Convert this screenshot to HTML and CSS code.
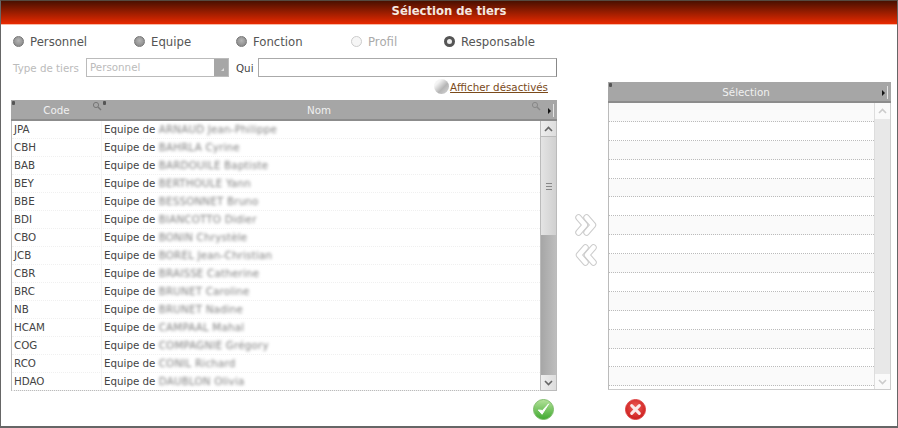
FILE: index.html
```html
<!DOCTYPE html>
<html>
<head>
	<title>Sélection de tiers</title>
	<link rel="stylesheet" href="styles.css">
</head>
<body>
<div class="win">
	<div class="titlebar">Sélection de tiers</div>
	<div class="content">
		<div class="left">
			<div class="radios">
				<label class="radio r1"><i class="dot"></i>Personnel</label>
				<label class="radio r2"><i class="dot"></i>Equipe</label>
				<label class="radio r3"><i class="dot"></i>Fonction</label>
				<label class="radio r4 off"><i class="dot"></i>Profil</label>
				<label class="radio on"><i class="dot"></i>Responsable</label>
			</div>
			<div class="filters">
				<span class="lbl">Type de tiers</span>
				<div class="combo"><span>Personnel</span><b class="combo-btn"></b></div>
				<span class="qui">Qui</span>
				<div class="input"></div>
			</div>
			<div class="linkrow"><i class="ball"></i><a href="#">Afficher désactivés</a></div>
			<div class="table">
				<div class="thead">
					<div class="th code"><em class="grip"></em>Code
						<svg class="mag m1" width="10" height="10" viewBox="0 0 10 10"><circle cx="4" cy="4" r="2.6" fill="none" stroke="#777"/><path d="M6 6l3 3" stroke="#777" stroke-width="1.4"/></svg>
						<em class="grip g2"></em>
					</div>
					<div class="th nom">Nom
						<svg class="mag m2" width="10" height="10" viewBox="0 0 10 10"><circle cx="4" cy="4" r="2.6" fill="none" stroke="#888"/><path d="M6 6l3 3" stroke="#888" stroke-width="1.4"/></svg>
						<b class="arrow"></b><i class="bar"></i>
					</div>
				</div>
				<div class="tbody">
					<div class="rows">
						<div class="row"><span class="c">JPA</span><span class="n">Equipe de <u>ARNAUD Jean-Philippe</u></span></div>
						<div class="row"><span class="c">CBH</span><span class="n">Equipe de <u>BAHRLA Cyrine</u></span></div>
						<div class="row"><span class="c">BAB</span><span class="n">Equipe de <u>BARDOUILE Baptiste</u></span></div>
						<div class="row"><span class="c">BEY</span><span class="n">Equipe de <u>BERTHOULE Yann</u></span></div>
						<div class="row"><span class="c">BBE</span><span class="n">Equipe de <u>BESSONNET Bruno</u></span></div>
						<div class="row"><span class="c">BDI</span><span class="n">Equipe de <u>BIANCOTTO Didier</u></span></div>
						<div class="row"><span class="c">CBO</span><span class="n">Equipe de <u>BONIN Chrystèle</u></span></div>
						<div class="row"><span class="c">JCB</span><span class="n">Equipe de <u>BOREL Jean-Christian</u></span></div>
						<div class="row"><span class="c">CBR</span><span class="n">Equipe de <u>BRAISSE Catherine</u></span></div>
						<div class="row"><span class="c">BRC</span><span class="n">Equipe de <u>BRUNET Caroline</u></span></div>
						<div class="row"><span class="c">NB</span><span class="n">Equipe de <u>BRUNET Nadine</u></span></div>
						<div class="row"><span class="c">HCAM</span><span class="n">Equipe de <u>CAMPAAL Mahal</u></span></div>
						<div class="row"><span class="c">COG</span><span class="n">Equipe de <u>COMPAGNIE Grégory</u></span></div>
						<div class="row"><span class="c">RCO</span><span class="n">Equipe de <u>CONIL Richard</u></span></div>
						<div class="row"><span class="c">HDAO</span><span class="n">Equipe de <u>DAUBLON Olivia</u></span></div>
					</div>
					<div class="sbar">
						<div class="sb-btn"><svg width="9" height="6" viewBox="0 0 9 6"><path d="M1 5l3.500-3.500L8 5" fill="none" stroke="#666" stroke-width="1.600"/></svg></div>
						<div class="thumb"><i></i></div>
						<div class="track"></div>
						<div class="sb-btn"><svg width="9" height="6" viewBox="0 0 9 6"><path d="M1 1l3.500 3.500L8 1" fill="none" stroke="#666" stroke-width="1.600"/></svg></div>
					</div>
				</div>
			</div>
		</div>

		<div class="mid">
			<svg width="24" height="22" viewBox="0 0 24 22" fill="none" stroke-linecap="round" stroke-linejoin="round">
				<path d="M4.500 3.500L11 11l-6.500 7.500" stroke="#ccc" stroke-width="6.500"/>
				<path d="M4.500 3.500L11 11l-6.500 7.500" stroke="#fff" stroke-width="4.500"/>
				<path d="M12.500 3.500L19 11l-6.500 7.500" stroke="#ccc" stroke-width="6.500"/>
				<path d="M12.500 3.500L19 11l-6.500 7.500" stroke="#fff" stroke-width="4.500"/>
			</svg>
			<svg width="24" height="22" viewBox="0 0 24 22" fill="none" stroke-linecap="round" stroke-linejoin="round">
				<path d="M19.500 3.500L13 11l6.500 7.500" stroke="#ccc" stroke-width="6.500"/>
				<path d="M19.500 3.500L13 11l6.500 7.500" stroke="#fff" stroke-width="4.500"/>
				<path d="M11.500 3.500L5 11l6.500 7.500" stroke="#ccc" stroke-width="6.500"/>
				<path d="M11.500 3.500L5 11l6.500 7.500" stroke="#fff" stroke-width="4.500"/>
			</svg>
		</div>

		<div class="right">
			<div class="thead sel"><em class="grip"></em>Sélection<b class="arrow"></b><i class="bar"></i></div>
			<div class="tbody sel-body">
				<div class="rows dotted">
					<div></div><div></div><div></div><div></div><div></div>
					<div></div><div></div><div></div><div></div><div></div>
					<div></div><div></div><div></div><div></div><div></div>
				</div>
				<div class="sbar faded">
					<div class="sb-btn"><svg width="9" height="6" viewBox="0 0 9 6"><path d="M1 5l3.500-3.500L8 5" fill="none" stroke="#ccc" stroke-width="1.600"/></svg></div>
					<div class="track"></div>
					<div class="sb-btn"><svg width="9" height="6" viewBox="0 0 9 6"><path d="M1 1l3.500 3.500L8 1" fill="none" stroke="#ccc" stroke-width="1.600"/></svg></div>
				</div>
			</div>
		</div>
	</div>
	<div class="actions">
		<svg width="21" height="21" viewBox="0 0 22 22">
			<defs><linearGradient id="gr" x1="0" y1="0" x2="0" y2="1"><stop offset="0" stop-color="#b4e29a"/><stop offset="1" stop-color="#3fa92f"/></linearGradient></defs>
			<circle cx="11" cy="11" r="10.500" fill="url(#gr)" stroke="#7dbb6a"/>
			<path d="M5.500 11.500l4 4.500 7-11-6.500 7z" fill="#fff" stroke="#fff" stroke-linejoin="round"/>
		</svg>
		<svg width="21" height="21" viewBox="0 0 22 22">
			<defs><radialGradient id="rd" cx=".5" cy=".4" r=".7"><stop offset="0" stop-color="#f0605a"/><stop offset="1" stop-color="#c41010"/></radialGradient></defs>
			<circle cx="11" cy="11" r="10.500" fill="url(#rd)" stroke="#d44"/>
			<path d="M7 7l8 8M15 7l-8 8" stroke="#fbeaea" stroke-width="3.200" stroke-linecap="round"/>
		</svg>
	</div>
</div>
</body>
</html>
```

FILE: styles.css
```css
*{
	box-sizing: border-box;
}

body{
	margin: 0;
	font-family: "DejaVu Sans", sans-serif;
	font-size: 10.3px;
	color: #444;
	background: #fff;
}

.win{
	width: 898px;
	height: 428px;
	border: 1px solid #666;
	border-bottom-width: 2px;
	border-top-color: #554a40;
	background: #fff;
}

.titlebar{
	height: 24px;
	background: linear-gradient(#4a1000, #e92a00);
	border-bottom: 1px solid #f9b9a5;
	color: #f5e8e0;
	font-weight: bold;
	font-size: 11.6px;
	line-height: 20px;
	text-align: center;
}

.content{
	display: flex;
	padding: 0 6px 0 10px;
}

.left{
	width: 546px;
}

.radios{
	display: flex;
	height: 33px;
	padding: 9px 0 0 2px;
	font-size: 11.7px;
	color: #555;
}

.radio{
	display: flex;
	align-items: center;
	height: 15px;
}

.r1{ width: 121px; }
.r2{ width: 102px; }
.r3{ width: 115px; }
.r4{ width: 93px; }

.dot{
	width: 11px;
	height: 11px;
	margin-right: 6px;
	border-radius: 50%;
	border: 1px solid #777;
	background: radial-gradient(circle at 50% 40%, #b5b5b5, #808080);
}

.off{
	color: #aaa;
}

.off .dot{
	border-color: #ccc;
	background: #f6f6f6;
}

.on .dot{
	border: 3px solid #555;
	background: #eee;
}

.filters{
	display: flex;
	align-items: center;
	height: 19px;
}

.lbl{
	width: 75px;
	padding-left: 2px;
	color: #bbb;
}

.combo{
	display: flex;
	justify-content: space-between;
	width: 143px;
	height: 19px;
	padding-left: 3px;
	border: 1px solid #bbb;
	line-height: 16px;
	color: #bbb;
}

.combo-btn{
	position: relative;
	width: 14px;
	background: #a6a6a6;
}

.combo-btn:after{
	content: "";
	position: absolute;
	right: 4px;
	bottom: 5px;
	border-left: 3px solid transparent;
	border-bottom: 3px solid #ddd;
}

.qui{
	width: 29px;
	padding-left: 7px;
}

.input{
	width: 299px;
	height: 19px;
	border: 1px solid #aaa;
	border-right-color: #888;
}

.linkrow{
	display: flex;
	align-items: center;
	justify-content: flex-end;
	height: 23px;
	padding: 0 9px 4px 0;
}

.linkrow a{
	margin-left: 1px;
	color: #7a4a1a;
}

.ball{
	width: 15px;
	height: 15px;
	border-radius: 50%;
	background: linear-gradient(135deg, #f4f4f4 25%, #b5b5b5 60%, #d8d8d8);
}

.thead{
	display: flex;
	height: 21px;
	background: #a6a6a6;
	border-bottom: 2px solid #8c8c8c;
	color: #f0f0f0;
	line-height: 21px;
}

.th{
	position: relative;
	text-align: center;
}

.th.code{
	width: 91px;
}

.th.nom{
	flex: 1;
	padding-right: 21px;
}

.grip{
	position: absolute;
	top: 1px;
	left: 1px;
	width: 3px;
	height: 4px;
	border-radius: 1px;
	background: #555;
}

.g2{
	left: auto;
	right: -4px;
}

.mag{
	position: absolute;
	top: 1px;
}

.m1{
	left: 81px;
}

.m2{
	right: 16px;
}

.arrow{
	position: absolute;
	top: 8px;
	right: 6px;
	border-left: 3px solid #111;
	border-top: 3px solid transparent;
	border-bottom: 3px solid transparent;
}

.bar{
	position: absolute;
	top: 4px;
	right: 3px;
	width: 1px;
	height: 13px;
	background: #e4e4e4;
}

.tbody{
	display: flex;
	height: 270px;
	border: 1px solid #bbb;
	border-top: 0;
}

.rows{
	flex: 1;
}

.row{
	display: flex;
	height: 18px;
	line-height: 17px;
	border-bottom: 1px dotted #f0f0f0;
}

.c{
	width: 90px;
	padding-left: 2px;
	border-right: 1px solid #f3f3f3;
}

.n{
	padding-left: 2px;
	white-space: pre;
}

.n u{
	text-decoration: none;
	filter: blur(1.8px);
	color: #808080;
	letter-spacing: .2px;
}

.sbar{
	display: flex;
	flex-direction: column;
	width: 16px;
	border-left: 1px solid #bbb;
	background: #ebebeb;
}

.sb-btn{
	display: flex;
	align-items: center;
	justify-content: center;
	height: 15px;
	background: linear-gradient(90deg, #eee, #ddd);
}

.thumb{
	display: flex;
	align-items: center;
	justify-content: center;
	height: 99px;
	background: linear-gradient(90deg, #e4e4e4, #d0d0d0);
	border-top: 1px solid #bbb;
}

.thumb i{
	width: 6px;
	height: 7px;
	background: repeating-linear-gradient(#888 0 1px, transparent 1px 3px);
}

.track{
	flex: 1;
	background: linear-gradient(90deg, #a6a6a6, #bdbdbd);
}

.mid{
	display: flex;
	flex-direction: column;
	gap: 8px;
	width: 51px;
	padding: 189px 0 0 17px;
}

.right{
	width: 283px;
	padding-top: 57px;
}

.thead.sel{
	position: relative;
	justify-content: center;
	padding-right: 7px;
}

.sel-body{
	height: 287px;
	border-color: #ccc;
	border-left: 1px solid #bbb;
}

.dotted div{
	height: 18.9px;
	border-bottom: 1px dotted #bbb;
}

.dotted div:nth-child(odd){
	background: #fafafa;
}

.faded{
	border-left-color: #ddd;
}

.faded .track{
	background: #e8e8e8;
}

.faded .sb-btn{
	background: #fafafa;
}

.faded .sb-btn:first-child{
	height: 16px;
}

.actions{
	display: flex;
	gap: 71px;
	padding: 8px 0 0 532px;
}
```
